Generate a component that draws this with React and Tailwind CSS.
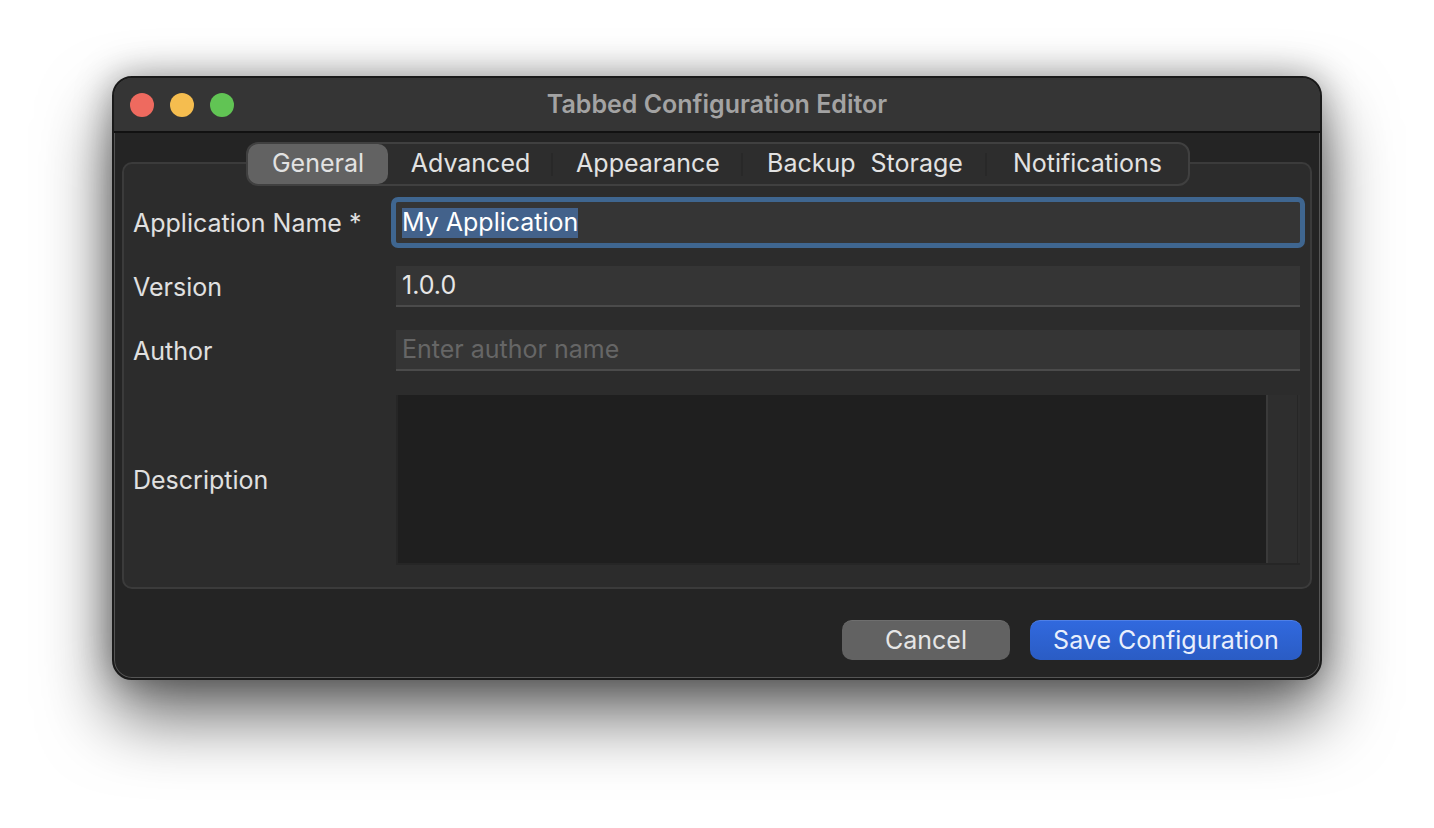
import React from 'react';

const font = { fontFamily: 'Inter, "Noto Sans", sans-serif' };

const Field = ({ label, children, className = '' }) => (
  <div className={`grid grid-cols-[263px_904px] items-center ${className}`}>
    <div className="text-[25px] leading-[30px] text-[#e0e0e0]">{label}</div>
    {children}
  </div>
);

const Tab = ({ width, active, divider, children }) => (
  <div className={`relative flex h-[40px] items-center justify-center text-[25px] text-[#e2e2e2] ${width} ${active ? 'rounded-[10px] bg-[#626262]' : ''}`}>
    {children}
    {divider && <span className="absolute right-0 top-[9px] h-[23px] w-[2px] bg-[#282828]" />}
  </div>
);

const App = () => {
  return (
    <div className="h-[828px] w-[1434px] overflow-hidden bg-white pl-[112px] pt-[76px]" style={font}>
      <div className="flex h-[604px] w-[1210px] flex-col overflow-hidden rounded-[20px] border-2 border-[#1a1a1a] bg-[#242424] shadow-[0_0_0_1px_#555_inset,0_36px_70px_rgba(0,0,0,0.6),0_0_36px_rgba(0,0,0,0.35)]">
        {/* title bar */}
        <div className="relative flex h-[55px] shrink-0 items-center justify-center border-b-2 border-[#111] bg-[#353535]">
          <div className="absolute left-[16px] top-[15px] flex gap-[16px]">
            <span className="h-[24px] w-[24px] rounded-full bg-[#ee6a5f]" />
            <span className="h-[24px] w-[24px] rounded-full bg-[#f5bd4f]" />
            <span className="h-[24px] w-[24px] rounded-full bg-[#61c454]" />
          </div>
          <div className="text-[25px] font-semibold text-[#a3a3a3]">Tabbed Configuration Editor</div>
        </div>

        <div className="flex flex-1 flex-col px-[8px] pt-[9px]">
          {/* tab bar sits over the top edge of the pane */}
          <div className="relative z-10 -mb-[24px] ml-[124px] flex h-[44px] w-[944px] items-center rounded-[12px] border-2 border-[#404040] bg-[#2d2d2d] px-[0px]">
            <Tab width="w-[140px]" active>General</Tab>
            <Tab width="w-[165px]" divider>Advanced</Tab>
            <Tab width="w-[190px]" divider>Appearance</Tab>
            <Tab width="w-[244px]" divider>
              <span className="flex gap-[15px]"><span>Backup</span><span>Storage</span></span>
            </Tab>
            <Tab width="w-[201px]">Notifications</Tab>
          </div>

          {/* pane */}
          <div className="flex h-[427px] w-[1190px] flex-col rounded-[10px] border-2 border-[#3b3b3b] bg-[#2c2c2c] pl-[9px] pt-[38px]">
            <Field label="Application Name *">
              <div className="flex h-[41px] items-center bg-[#353535] pl-[6px] text-[25px] text-white outline-[5px] outline-[#3f6690] rounded-[2px]">
                <span className="flex h-[30px] items-center bg-[#43628b]">My Application</span>
              </div>
            </Field>
            <Field label="Version" className="mt-[23px]">
              <div className="flex h-[41px] items-center border-b-2 border-[#4b4b4b] bg-[#353535] pl-[6px] text-[25px] text-[#e6e6e6]">1.0.0</div>
            </Field>
            <Field label="Author" className="mt-[23px]">
              <div className="flex h-[41px] items-center border-b-2 border-[#4b4b4b] bg-[#353535] pl-[6px] text-[25px] text-[#666]">Enter author name</div>
            </Field>
            <Field label="Description" className="mt-[24px]">
              <div className="flex h-[170px] border-b-2 border-l-2 border-[#262626] bg-[#2e2e2e]">
                <div className="w-[870px] border-r-2 border-[#3a3a3a] bg-[#1f1f1f]" />
                <div className="flex-1" />
                <div className="mr-[2px] w-[1px] bg-[#262626]" />
              </div>
            </Field>
          </div>

          {/* footer buttons */}
          <div className="mt-[31px] flex justify-end gap-[20px] pr-[10px]">
            <button className="h-[40px] w-[168px] rounded-[10px] border-t border-[#6e6e6e] bg-[#626262] text-[25px] text-[#e6e6e6]">Cancel</button>
            <button className="h-[40px] w-[272px] rounded-[10px] border-t border-[#4f7fe6] bg-gradient-to-b from-[#3169de] to-[#2a5cc4] text-[25px] text-[#e9effc]">Save Configuration</button>
          </div>
        </div>
      </div>
    </div>
  );
};

export default App;
